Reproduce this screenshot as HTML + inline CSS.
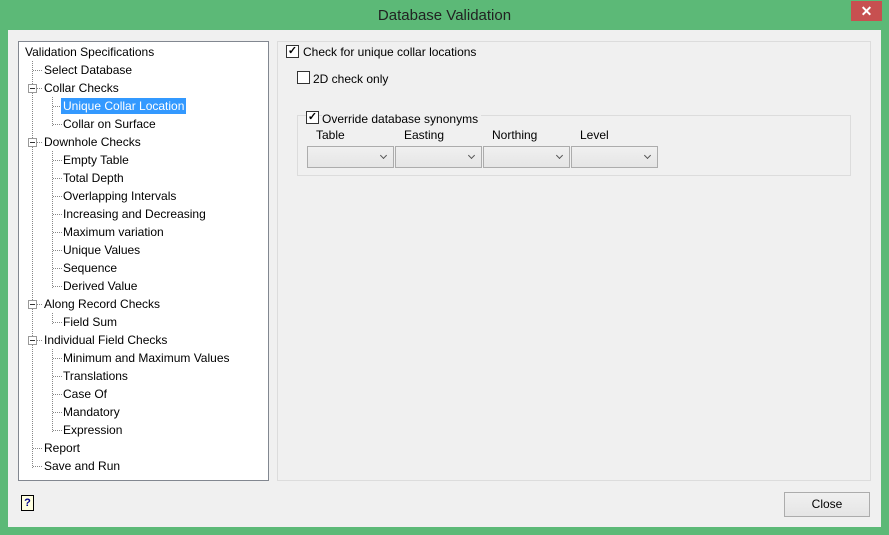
<!DOCTYPE html>
<html><head><style>
*{margin:0;padding:0;box-sizing:border-box}
body{width:889px;height:535px;background:#5cb977;font-family:"Liberation Sans",sans-serif;font-size:12px;color:#000;position:relative;overflow:hidden}
.a{position:absolute}
.title{left:0;top:7px;width:889px;text-align:center;font-size:15px;color:#222}
.close{left:851px;top:1px;width:31px;height:20px;background:#c75050;color:#fff;text-align:center;font-size:14px;font-weight:bold;line-height:20px}
.client{left:8px;top:30px;width:873px;height:497px;background:#f0f0f0}
.tree{left:18px;top:41px;width:251px;height:440px;background:#fff;border:1px solid #828790}
.t{position:absolute;white-space:nowrap;line-height:14px}
.sel{background:#3399ff;color:#fff;padding:1px 2px;margin-left:-2px}
.vl{position:absolute;width:0;border-left:1px dotted #888}
.hl{position:absolute;height:0;border-top:1px dotted #888}
.box{position:absolute;width:9px;height:9px;border:1px solid #999;background:#fff}
.box:after{content:"";position:absolute;left:1px;top:3px;width:5px;height:1px;background:#333}
.grp{left:277px;top:41px;width:594px;height:440px;border:1px solid #dcdcdc}
.cb{position:absolute;width:13px;height:13px;border:1px solid #333;background:#fff;font-size:11px;line-height:11px;text-align:center;font-weight:bold}
.g2{left:297px;top:115px;width:554px;height:61px;border:1px solid #dcdcdc}
.dd{position:absolute;top:146px;width:87px;height:22px;border:1px solid #acacac;background:linear-gradient(#f0f0f0,#e5e5e5)}
.dd:after{content:"";position:absolute;right:7px;top:6px;width:4px;height:4px;border-right:1.5px solid #555;border-bottom:1.5px solid #555;transform:rotate(45deg)}
.btn{left:784px;top:492px;width:86px;height:25px;border:1px solid #acacac;background:linear-gradient(#f0f0f0,#e5e5e5);text-align:center;line-height:23px}
</style></head><body>
<div class="a title">Database Validation</div>
<div class="a close">✕</div>
<div class="a client"></div>
<div class="a tree">
<div class="vl" style="left:13px;top:19px;height:407px"></div>
<div class="vl" style="left:33px;top:55px;height:29px"></div>
<div class="vl" style="left:33px;top:109px;height:137px"></div>
<div class="vl" style="left:33px;top:271px;height:11px"></div>
<div class="vl" style="left:33px;top:307px;height:83px"></div>
</div>
<div class="a grp"></div>
<div class="cb" style="left:286px;top:45px">✓</div>
<div class="t" style="left:303px;top:45px;background:#f0f0f0;padding-right:4px">Check for unique collar locations</div>
<div class="cb" style="left:297px;top:71px"></div>
<div class="t" style="left:313px;top:72px">2D check only</div>
<div class="a g2"></div>
<div class="cb" style="left:306px;top:111px">✓</div>
<div class="t" style="left:322px;top:112px;background:#f0f0f0;padding-right:3px">Override database synonyms</div>
<div class="t" style="left:316px;top:128px">Table</div>
<div class="t" style="left:404px;top:128px">Easting</div>
<div class="t" style="left:492px;top:128px">Northing</div>
<div class="t" style="left:580px;top:128px">Level</div>
<div class="dd" style="left:307px"></div>
<div class="dd" style="left:395px"></div>
<div class="dd" style="left:483px"></div>
<div class="dd" style="left:571px"></div>
<div class="a" style="left:21px;top:495px;width:13px;height:16px;border:1px solid #000;background:#ffffe0;font-size:11px;font-weight:bold;color:#00008b;text-align:center;line-height:14px">?</div>
<div class="a btn">Close</div>
<script>
var items=[[0,"Validation Specifications"],[1,"Select Database"],[1,"Collar Checks",1],[2,"Unique Collar Location",0,1],[2,"Collar on Surface"],[1,"Downhole Checks",1],[2,"Empty Table"],[2,"Total Depth"],[2,"Overlapping Intervals"],[2,"Increasing and Decreasing"],[2,"Maximum variation"],[2,"Unique Values"],[2,"Sequence"],[2,"Derived Value"],[1,"Along Record Checks",1],[2,"Field Sum"],[1,"Individual Field Checks",1],[2,"Minimum and Maximum Values"],[2,"Translations"],[2,"Case Of"],[2,"Mandatory"],[2,"Expression"],[1,"Report"],[1,"Save and Run"]];
var tr=document.querySelector('.tree'),h='';
items.forEach(function(it,i){var y=3+18*i,x=[6,25,44][it[0]];
if(it[0]==1){h+='<div class="hl" style="left:14px;top:'+(y+7)+'px;width:9px"></div>';}
if(it[0]==2){h+='<div class="hl" style="left:34px;top:'+(y+7)+'px;width:9px"></div>';}
if(it[2]){h+='<div class="box" style="left:9px;top:'+(y+3)+'px"></div>';}
h+='<div class="t" style="left:'+x+'px;top:'+y+'px"><span class="'+(it[3]?'sel':'')+'">'+it[1]+'</span></div>';});
tr.innerHTML+=h;
</script>
</body></html>
